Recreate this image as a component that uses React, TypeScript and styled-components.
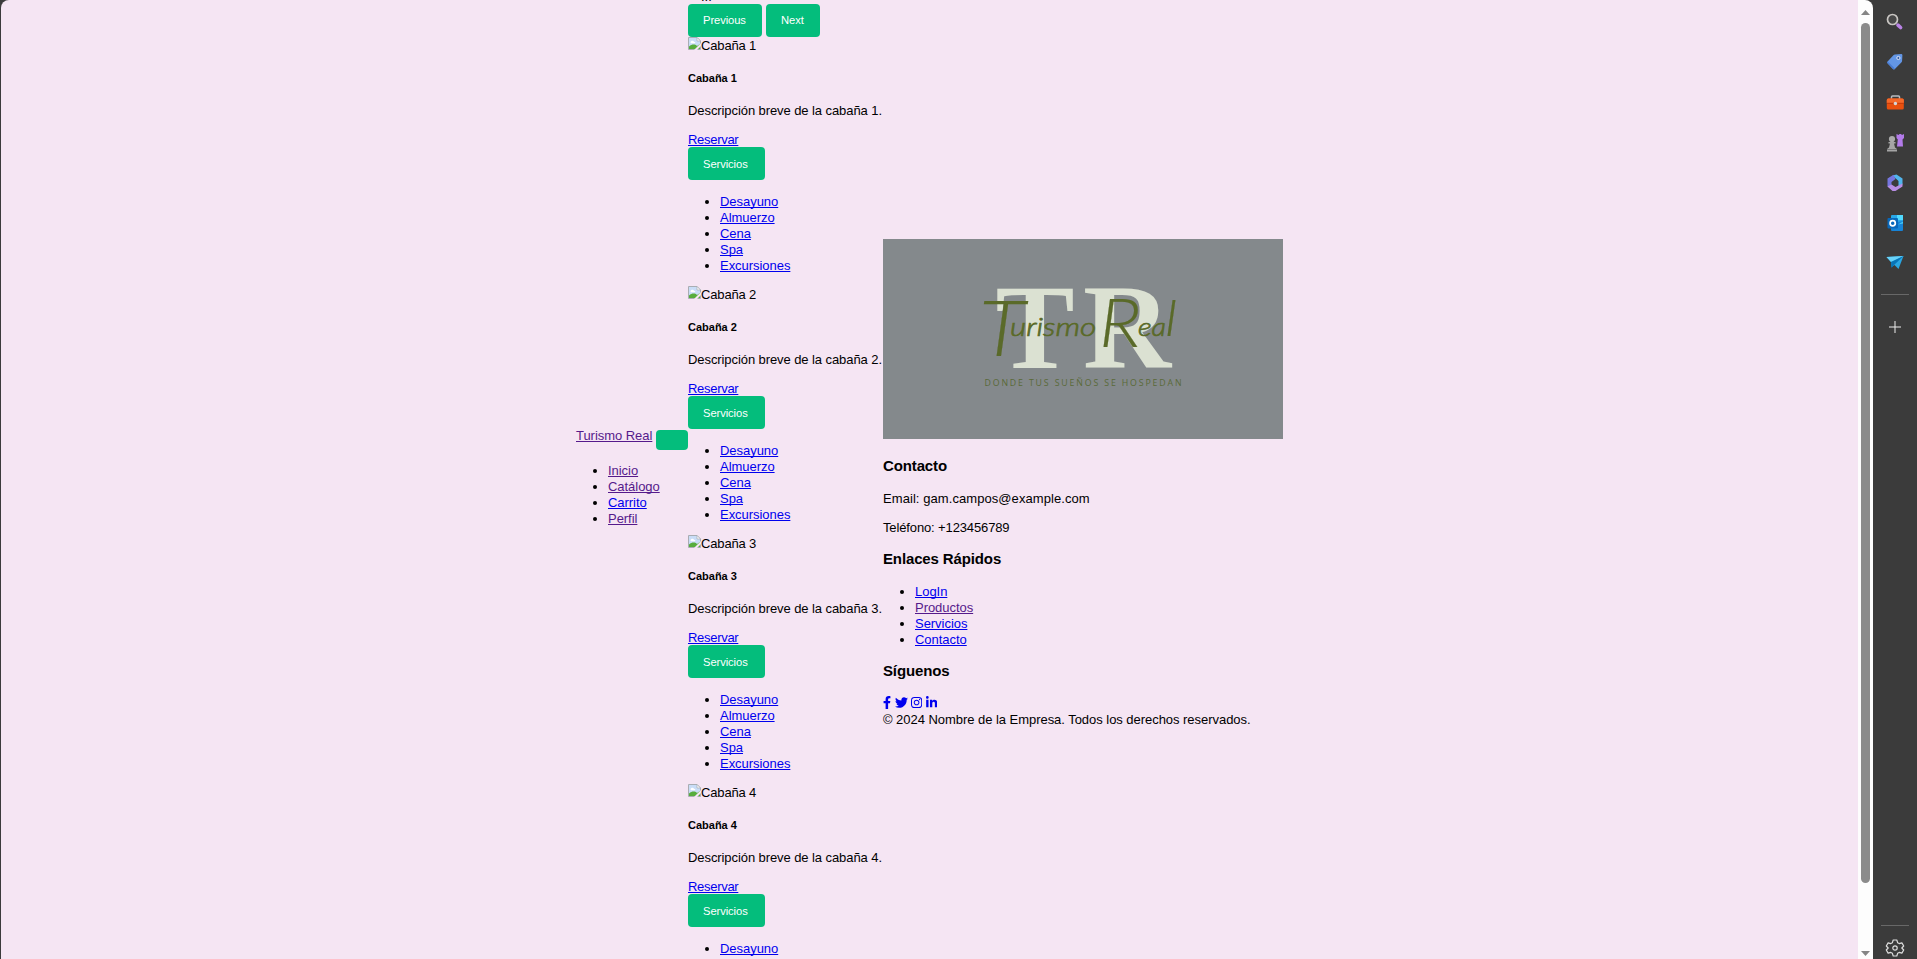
import React from 'react';
import styled, { createGlobalStyle } from 'styled-components';
import { FaFacebookF, FaTwitter, FaInstagram, FaLinkedinIn } from 'react-icons/fa';

const GlobalStyle = createGlobalStyle`
  * { box-sizing: border-box; }
  html, body { margin: 0; height: 100%; overflow: hidden; background: #3b3b3b; }
  body { font: 13px/16px "Liberation Sans", Arial, sans-serif; letter-spacing: -0.04px; color: #000; }
  #root { height: 100%; }
`;

const Window = styled.div`
  display: flex;
  height: 959px;
  padding-left: 1px;
  background: #3b3b3b;
`;
const Viewport = styled.div`
  display: flex;
  width: 1872px;
  height: 100%;
  border-radius: 8px 8px 0 0;
  overflow: hidden;
`;
const Page = styled.div`
  flex: 1;
  display: flex;
  align-items: flex-start;
  padding-left: 575px;
  background: #f5e5f3;
  overflow: hidden;
`;
const Nav = styled.nav`
  width: 112px;
  padding-top: 428px;
`;
const Brand = styled.div`
  display: flex;
  justify-content: space-between;
  height: 21px;
`;
const Toggler = styled.button`
  width: 32px;
  height: 20px;
  margin-top: 2px;
  border: 0;
  border-radius: 4px;
  background: #04bd7c;
`;
const Link = styled.a<{ $visited?: boolean }>`
  color: ${(p) => (p.$visited ? '#551a8b' : '#0000ee')};
  text-decoration: underline;
  text-underline-offset: 1px;
  text-decoration-thickness: 1px;
  text-decoration-skip-ink: none;
`;
const List = styled.ul`
  margin: 14px 0 12px;
  padding-left: 32px;
  white-space: nowrap;
`;
const Catalog = styled.main`
  width: 195px;
  white-space: nowrap;
`;
const Indicators = styled.div`
  display: flex;
  align-items: flex-end;
  height: 4px;
  line-height: 14px;
  overflow: hidden;
  padding: 0 0 0 13px;
`;
const Controls = styled.div`
  display: flex;
  gap: 4px;
`;
const Button = styled.button<{ $width: number; $line?: number }>`
  display: block;
  width: ${(p) => p.$width}px;
  height: 33px;
  padding: 0 0 0 15px;
  border: 0;
  border-radius: 4px;
  background: #04bd7c;
  color: #fff;
  font: 11.2px/${(p) => p.$line ?? 33}px "Liberation Sans", Arial, sans-serif;
  letter-spacing: -0.08px;
  text-align: left;
  overflow: hidden;
`;
const Missing = styled.div`
  display: flex;
  height: 16px;
  line-height: 18px;
  letter-spacing: -0.15px;
`;
const CardTitle = styled.h5`
  margin: 19px 0 18px;
  font-size: 11px;
  line-height: 13px;
  letter-spacing: 0;
`;
const Text = styled.p<{ $spacing?: number }>`
  margin: 13px 0;
  letter-spacing: ${(p) => p.$spacing ?? 0}px;
`;
const CardText = styled(Text)`
  margin-top: 0;
  letter-spacing: -0.08px;
`;
const Reserve = styled.div`
  height: 15px;
  letter-spacing: -0.3px;
`;
const Footer = styled.footer`
  width: 400px;
  padding-top: 239px;
`;
const Logo = styled.svg`
  display: block;
  margin-bottom: 18px;
`;
const Heading = styled.h3`
  margin: 14px 0 16px;
  font-size: 15px;
  line-height: 18px;
  letter-spacing: -0.13px;
`;
const Social = styled.div`
  display: flex;
  align-items: flex-start;
  gap: 3.6px;
  height: 16px;
  color: #0000ee;
`;
const SocialLink = styled.a<{ $width: number }>`
  display: block;
  width: ${(p) => p.$width}px;
  height: 13px;
  svg { display: block; width: 100%; height: 100%; }
`;
const Copyright = styled.div`
  white-space: nowrap;
`;
const Scrollbar = styled.div`
  display: flex;
  flex-direction: column;
  align-items: center;
  width: 15px;
  background: #fdfdfd;
`;
const Track = styled.div`
  flex: 1;
  padding-top: 8px;
`;
const Thumb = styled.div`
  width: 9px;
  height: 860px;
  border-radius: 5px;
  background: #8b8b8b;
`;
const Arrow = styled.div<{ $down?: boolean }>`
  width: 9px;
  height: 5px;
  margin: ${(p) => (p.$down ? '0 0 3px' : '10px 0 0')};
  background: #858585;
  clip-path: ${(p) => (p.$down ? 'polygon(0 0, 100% 0, 50% 100%)' : 'polygon(50% 0, 100% 100%, 0 100%)')};
`;
const Sidebar = styled.aside`
  flex: 1;
  display: flex;
  flex-direction: column;
  align-items: center;
  padding-top: 12px;
  overflow: hidden;
`;
const Tool = styled.svg`
  display: block;
  flex: none;
  width: 20px;
  height: 20px;
  margin-bottom: 20.2px;
  overflow: visible;
`;
const Divider = styled.hr`
  flex: none;
  width: 28px;
  height: 1px;
  margin: 0;
  border: 0;
  background: #686868;
`;
const Spacer = styled.div<{ $height: number }>`
  flex: none;
  height: ${(p) => p.$height}px;
`;

const BrokenImage = () => (
  <svg width="13" height="13" viewBox="0 0 13 13">
    <path d="M.5.5h8.500L12.500 4v8.500H.5z" fill="#c9ddf7" stroke="#a9adb3" />
    <path d="M1 12V9.500C4 7 7 7 9 9l3-2v5z" fill="#57ad3c" />
    <path d="M2.500 5.500c0-2 3-2.400 3.400-.7 1.800 0 1.800 1.500.7 1.500H3z" fill="#fff" />
    <path d="M6 13l7-7v3l-4 4z" fill="#f5e5f3" />
    <path d="M9 .5V4h3.500z" fill="#fff" stroke="#a9adb3" strokeWidth=".7" />
  </svg>
);

const services = ['Desayuno', 'Almuerzo', 'Cena', 'Spa', 'Excursiones'];

const Cabin = ({ n }: { n: number }) => (
  <article>
    <Missing><BrokenImage /><span>Cabaña {n}</span></Missing>
    <CardTitle>Cabaña {n}</CardTitle>
    <CardText>Descripción breve de la cabaña {n}.</CardText>
    <Reserve><Link>Reservar</Link></Reserve>
    <Button $width={77} $line={35}>Servicios</Button>
    <List>{services.map((s) => <li key={s}><Link>{s}</Link></li>)}</List>
  </article>
);

const BrandLogo = () => (
  <Logo width="400" height="200" viewBox="0 0 400 200">
    <rect width="400" height="200" fill="#84898c" />
    <g fill="#dbe1d2" fontFamily="Liberation Serif, serif" fontWeight="700" fontSize="121">
      <text x="112.500" y="129" textLength="79" lengthAdjust="spacingAndGlyphs">T</text>
      <text x="200" y="129" textLength="88" lengthAdjust="spacingAndGlyphs">R</text>
    </g>
    <g fill="#5a6a29" stroke="#5a6a29" strokeWidth=".2" fontFamily="Lato, sans-serif" fontStyle="italic" fontWeight="300">
      <text x="96" y="117" fontSize="76" textLength="46" lengthAdjust="spacingAndGlyphs">T</text>
      <text x="127" y="97" fontSize="26" strokeWidth=".7" textLength="86" lengthAdjust="spacingAndGlyphs">urismo</text>
      <text x="216" y="108" fontSize="67" textLength="42" lengthAdjust="spacingAndGlyphs">R</text>
      <text x="255" y="97" fontSize="26" strokeWidth=".7" textLength="28" lengthAdjust="spacingAndGlyphs">ea</text>
      <text x="282" y="97" fontSize="50" textLength="12" lengthAdjust="spacingAndGlyphs">l</text>
    </g>
    <text x="101.500" y="147" fill="#5a6a38" fontFamily="Open Sans, sans-serif" fontSize="8.800" textLength="197">DONDE TUS SUEÑOS SE HOSPEDAN</text>
  </Logo>
);

const SidebarTools = () => (
  <>
    <Tool viewBox="0 0 20 20">
      <circle cx="7.500" cy="7.500" r="5" fill="#484848" stroke="#c9c6c3" strokeWidth="1.700" />
      <path d="M13 13.200l2.600 2.300" stroke="#ba83e6" strokeWidth="3.600" strokeLinecap="round" />
    </Tool>
    <Tool viewBox="0 0 20 20">
      <path d="M10 2.500l6.200-.4q1.200 0 1.200 1.200l-.3 5.500q0 1-.8 1.700l-6.400 6.400q-1 1-2 0L2.600 11.600q-1-1 0-2L8.400 3.300q.6-.7 1.600-.8z" fill="#6396e5" />
      <path d="M2 10.500l6.500 6.800 1.500-.8L2.600 9.600z" fill="#477bd5" />
      <circle cx="13.400" cy="6" r="1.600" fill="#345ba5" stroke="#dce4f4" />
    </Tool>
    <Tool viewBox="0 0 20 20">
      <path d="M6.500 7V5q0-1 1-1h6q1 0 1 1v2" fill="none" stroke="#b9bcc0" strokeWidth="1.500" />
      <rect x="1.800" y="6.500" width="17" height="11" rx="1.500" fill="#e9500e" />
      <path d="M1.800 8q0-1.500 1.500-1.500h14q1.500 0 1.500 1.500v3h-17z" fill="#f4692a" />
      <path d="M2 11.300h17" stroke="#c2390c" />
      <circle cx="10.400" cy="11.500" r="1.700" fill="#d5d7da" />
    </Tool>
    <Tool viewBox="0 0 20 20">
      <path d="M11.500 1l2 1 1-1h1.500l1 1 2-1v4l-1.500 1.500.5 7H12l.8-7L11.500 5z" fill="#b37bea" />
      <circle cx="7" cy="6" r="3.100" fill="#aaa" />
      <path d="M3.500 9h7v1.500H9l1 4 2 1.500v2.500H2V16l2-1.500 1-4H3.500z" fill="#a5a5a5" />
      <path d="M2 16.500h10" stroke="#777" />
    </Tool>
    <Tool viewBox="0 0 20 20">
      <path d="M7.500 2.500l4-1 6 4v6l-4 1.500V8z" fill="#51b5ed" />
      <path d="M8.500 1.800L2.500 5.500v8l4 3V9l4-3z" fill="#7576df" />
      <path d="M2.500 13.500l5 4.500h3l7-4.500v-3l-7 3.500-4-2.500z" fill="#b88de4" />
    </Tool>
    <Tool viewBox="0 0 20 20">
      <rect x="6" y="2" width="12" height="14" rx="1" fill="#28a8e8" />
      <path d="M12 2h6v5h-6z" fill="#50d9ff" />
      <path d="M6 10l12-2v9q0 1-1 1H7q-1 0-1-1z" fill="#1683d7" />
      <path d="M13 11.500l5-3v2z" fill="#45c9f3" />
      <rect x="2.500" y="5" width="10.500" height="10.500" rx="1" fill="#0868bb" />
      <circle cx="7.700" cy="10.200" r="2.600" fill="none" stroke="#fff" strokeWidth="1.700" />
    </Tool>
    <Tool viewBox="0 0 20 20">
      <path d="M1.500 4L18.500 3l-5 13-4-4-3 2-.5-5z" fill="#29a6e2" />
      <path d="M1.500 4L18.500 3 6 9z" fill="#68d3fa" />
      <path d="M6 9l12.500-6L9 12l-2.500 3z" fill="#0874b7" />
    </Tool>
  </>
);

export default function App() {
  return (
    <>
      <GlobalStyle />
      <Window>
        <Viewport>
          <Page>
            <Nav>
              <Brand><Link $visited>Turismo Real</Link><Toggler aria-label="Menú" /></Brand>
              <List>
                <li><Link $visited>Inicio</Link></li>
                <li><Link $visited>Catálogo</Link></li>
                <li><Link>Carrito</Link></li>
                <li><Link $visited>Perfil</Link></li>
              </List>
            </Nav>
            <Catalog>
              <Indicators>...</Indicators>
              <Controls><Button $width={74}>Previous</Button><Button $width={54}>Next</Button></Controls>
              {[1, 2, 3, 4].map((n) => <Cabin key={n} n={n} />)}
            </Catalog>
            <Footer>
              <BrandLogo />
              <Heading>Contacto</Heading>
              <Text $spacing={0.07}>Email: gam.campos@example.com</Text>
              <Text $spacing={-0.13}>Teléfono: +123456789</Text>
              <Heading>Enlaces Rápidos</Heading>
              <List>
                <li><Link>LogIn</Link></li>
                <li><Link $visited>Productos</Link></li>
                <li><Link>Servicios</Link></li>
                <li><Link>Contacto</Link></li>
              </List>
              <Heading>Síguenos</Heading>
              <Social>
                <SocialLink $width={8}><FaFacebookF /></SocialLink>
                <SocialLink $width={13}><FaTwitter /></SocialLink>
                <SocialLink $width={11.2}><FaInstagram /></SocialLink>
                <SocialLink $width={11.2}><FaLinkedinIn /></SocialLink>
              </Social>
              <Copyright>© 2024 Nombre de la Empresa. Todos los derechos reservados.</Copyright>
            </Footer>
          </Page>
          <Scrollbar>
            <Arrow />
            <Track><Thumb /></Track>
            <Arrow $down />
          </Scrollbar>
        </Viewport>
        <Sidebar>
          <SidebarTools />
          <Spacer $height={1} />
          <Divider />
          <Spacer $height={21.5} />
          <Tool viewBox="0 0 20 20"><path d="M10 4v12M4 10h12" stroke="#eee" /></Tool>
          <Spacer $height={567.5} />
          <Divider />
          <Spacer $height={12} />
          <Tool viewBox="0 0 20 20">
            <path d="M8.200 2h3.600l.8 2.700 1.600.9 2.700-.7 1.800 3.100-1.900 2 1.900 2-1.800 3.100-2.700-.7-1.600.9-.8 2.700H8.200l-.8-2.700-1.600-.9-2.700.7L1.300 12l1.900-2-1.900-2 1.800-3.100 2.700.7 1.600-.9z" fill="none" stroke="#ddd" strokeWidth="1.200" strokeLinejoin="round" />
            <circle cx="10" cy="10" r="2.200" fill="none" stroke="#ddd" strokeWidth="1.200" />
          </Tool>
        </Sidebar>
      </Window>
    </>
  );
}
